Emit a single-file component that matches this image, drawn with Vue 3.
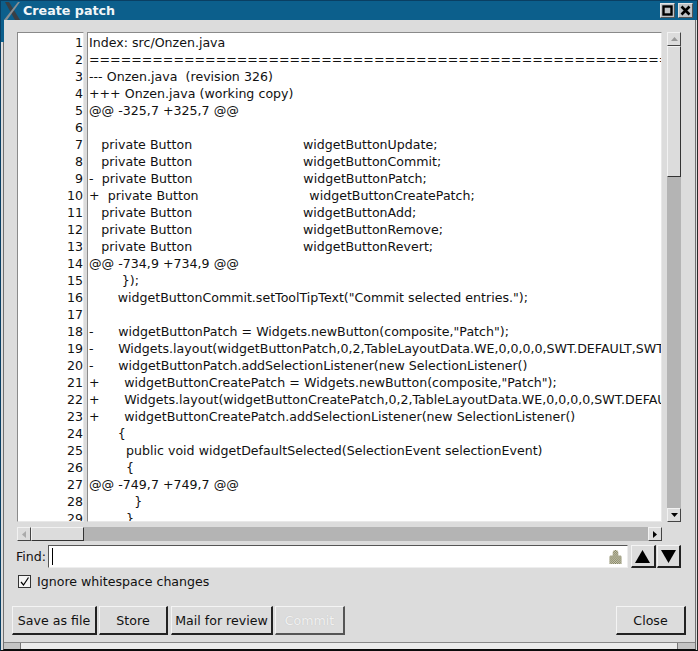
<script setup>
const lines = [
  'Index: src/Onzen.java',
  '===================================================================',
  '--- Onzen.java  (revision 326)',
  '+++ Onzen.java (working copy)',
  '@@ -325,7 +325,7 @@',
  '',
  '   private Button                           widgetButtonUpdate;',
  '   private Button                           widgetButtonCommit;',
  '-  private Button                           widgetButtonPatch;',
  '+  private Button                           widgetButtonCreatePatch;',
  '   private Button                           widgetButtonAdd;',
  '   private Button                           widgetButtonRemove;',
  '   private Button                           widgetButtonRevert;',
  '@@ -734,9 +734,9 @@',
  '        });',
  '       widgetButtonCommit.setToolTipText("Commit selected entries.");',
  '',
  '-      widgetButtonPatch = Widgets.newButton(composite,"Patch");',
  '-      Widgets.layout(widgetButtonPatch,0,2,TableLayoutData.WE,0,0,0,0,SWT.DEFAULT,SWT.DEFAULT);',
  '-      widgetButtonPatch.addSelectionListener(new SelectionListener()',
  '+      widgetButtonCreatePatch = Widgets.newButton(composite,"Patch");',
  '+      Widgets.layout(widgetButtonCreatePatch,0,2,TableLayoutData.WE,0,0,0,0,SWT.DEFAULT,SWT.DEFAULT);',
  '+      widgetButtonCreatePatch.addSelectionListener(new SelectionListener()',
  '       {',
  '         public void widgetDefaultSelected(SelectionEvent selectionEvent)',
  '         {',
  '@@ -749,7 +749,7 @@',
  '           }',
  '         }'
]
</script>

<template>
  <div class="window">
    <div class="titlebar">
      <svg class="xlogo" width="20" height="19" viewBox="0 0 20 19">
        <path d="M4 1 L8 1 L19 19 L14 19 Z" fill="#3a3f44" />
        <path d="M17 1 L19 1 L6 19 L3 19 Z" fill="#8a8f92" />
      </svg>
      <span class="title">Create patch</span>
      <span class="spacer"></span>
      <span class="wbtn"><svg width="11" height="11" viewBox="0 0 11 11"><rect x="1.5" y="1.5" width="8" height="8" fill="none" stroke="#000" stroke-width="2.4" /></svg></span>
      <span class="wbtn"><svg width="11" height="11" viewBox="0 0 11 11"><path d="M1.5 1.5 L9.5 9.5 M9.5 1.5 L1.5 9.5" stroke="#000" stroke-width="2.6" /></svg></span>
    </div>

    <div class="frame">
      <div class="content">
        <div class="editor-row">
          <div class="gutter sunken">
            <div v-for="(l, i) in lines" :key="i" class="num">{{ i + 1 }}</div>
          </div>
          <div class="code sunken">
            <div v-for="(l, i) in lines" :key="i" class="line">{{ l }}</div>
          </div>
          <div class="vscroll">
            <div class="arrow"><svg width="9" height="6" viewBox="0 0 9 6"><path d="M4.5 1 L8 5 L1 5 Z" fill="#999" /></svg></div>
            <div class="vthumb"></div>
            <div class="vtrack"></div>
            <div class="arrow"><svg width="9" height="6" viewBox="0 0 9 6"><path d="M1 1 L8 1 L4.5 5 Z" fill="#000" /></svg></div>
          </div>
        </div>

        <div class="hscroll">
          <div class="arrow harrow"><svg width="6" height="9" viewBox="0 0 6 9"><path d="M5 1 L5 8 L1 4.5 Z" fill="#aaa" /></svg></div>
          <div class="hthumb"></div>
          <div class="htrack"></div>
          <div class="arrow harrow"><svg width="6" height="9" viewBox="0 0 6 9"><path d="M1 1 L5 4.5 L1 8 Z" fill="#000" /></svg></div>
        </div>

        <div class="find-row">
          <label class="find-label">Find:</label>
          <div class="find-input">
            <span class="caret"></span>
            <svg class="lock" width="15" height="15" viewBox="0 0 15 16">
              <defs>
                <pattern id="dither" width="2" height="2" patternUnits="userSpaceOnUse">
                  <rect width="2" height="2" fill="#d8d6bc" />
                  <rect width="1" height="1" fill="#77775c" />
                  <rect x="1" y="1" width="1" height="1" fill="#77775c" />
                </pattern>
              </defs>
              <path d="M4.5 4 a3 3 0 0 1 6 0 V7 H13 Q14 7 14 9 V16 H1 V9 Q1 7 2 7 H4.5 Z" fill="url(#dither)" />
            </svg>
          </div>
          <button class="btn nav first"><svg width="15" height="13" viewBox="0 0 15 13"><path d="M7.5 0 L15 13 L0 13 Z" fill="#000" /></svg></button>
          <button class="btn nav"><svg width="15" height="13" viewBox="0 0 15 13"><path d="M0 0 L15 0 L7.5 13 Z" fill="#000" /></svg></button>
        </div>

        <div class="check-row">
          <span class="checkbox"><svg width="11" height="11" viewBox="0 0 11 11"><path d="M2 6 L4.5 9 L9.5 1.5" fill="none" stroke="#000" stroke-width="1.2" /></svg></span>
          <span>Ignore whitespace changes</span>
        </div>

        <div class="button-row">
          <button class="btn b1">Save as file</button>
          <button class="btn b2">Store</button>
          <button class="btn b3">Mail for review</button>
          <button class="btn b4 disabled">Commit</button>
          <span class="spacer"></span>
          <button class="btn b5">Close</button>
        </div>
      </div>

      <div class="statusbar">
        <span class="grip left"></span>
        <span class="spacer"></span>
        <span class="grip right"></span>
      </div>
    </div>
  </div>
</template>

<style>
html, body { margin: 0; padding: 0; background: #dcdcdc; }
</style>

<style scoped>
.window {
  width: 698px;
  height: 651px;
  box-sizing: border-box;
  display: flex;
  flex-direction: column;
  background: #dcdcdc;
  border-top: 1px solid #0a3f63;
  border-left: 1px solid #0a3f63;
  border-right: 1px solid #2a2a2a;
  border-bottom: 1px solid #0b0b0b;
  font-family: "DejaVu Sans", sans-serif;
  font-size: 12.6px;
  color: #111;
  overflow: hidden;
}
.titlebar {
  height: 19px;
  flex: none;
  display: flex;
  align-items: center;
  background: #0c5f8c;
  color: #fff;
}
.xlogo { flex: none; margin-right: 2px; }
.title {
  font-weight: bold;
  font-size: 12.7px;
  color: #f2f6f8;
}
.spacer { flex: 1; }
.wbtn {
  width: 15px;
  height: 15px;
  box-sizing: border-box;
  display: flex;
  align-items: center;
  justify-content: center;
  margin-left: 3px;
  background: #c0c3c5;
  border: 1px solid;
  border-color: #e4e4e4 #555 #555 #e4e4e4;
}
.wbtn:last-child { margin-right: 4px; }
.frame {
  position: relative;
  flex: 1;
  min-height: 0;
  display: flex;
  flex-direction: column;
  margin: 0 1px 0 2px;
  border-left: 1px solid #707070;
  border-right: 1px solid #707070;
  border-bottom: 1px solid #0b0b0b;
}
.frame::before {
  content: "";
  position: absolute;
  left: -3px;
  top: 0;
  width: 3px;
  height: 22px;
  background: #0c5f8c;
}
.content {
  flex: 1;
  display: flex;
  flex-direction: column;
  padding: 12px 14px 0 13px;
  min-height: 0;
  box-sizing: border-box;
}
.editor-row {
  display: flex;
  height: 490px;
  flex: none;
}
.sunken {
  box-sizing: border-box;
  background: #fff;
  border: 1px solid;
  border-color: #8a8a8a #e8e8e8 #e8e8e8 #8a8a8a;
  overflow: hidden;
}
.gutter {
  width: 67px;
  flex: none;
  text-align: right;
}
.num, .line {
  height: 17px;
  line-height: 17px;
  white-space: pre;
}
.line { word-spacing: 0.1px; }
.gutter .num:first-child, .code .line:first-child { margin-top: 1px; }
.code {
  width: 575px;
  flex: none;
  margin-left: 3px;
  padding-left: 1px;
}
.vscroll {
  width: 14px;
  flex: none;
  margin-left: 5px;
  display: flex;
  flex-direction: column;
}
.arrow {
  flex: none;
  width: 14px;
  height: 14px;
  box-sizing: border-box;
  display: flex;
  align-items: center;
  justify-content: center;
  background: #dcdcdc;
  border: 1px solid;
  border-color: #f2f2f2 #444 #444 #f2f2f2;
}
.vthumb {
  height: 131px;
  box-sizing: border-box;
  background: #dcdcdc;
  border: 1px solid;
  border-color: #f2f2f2 #333 #333 #f2f2f2;
  flex: none;
}
.vtrack, .htrack { flex: 1; background: #b4b4b4; }
.hscroll {
  display: flex;
  height: 14px;
  flex: none;
  margin-top: 5px;
  width: 645px;
}
.hthumb {
  width: 53px;
  box-sizing: border-box;
  flex: none;
  background: #dcdcdc;
  border: 1px solid;
  border-color: #f2f2f2 #333 #333 #f2f2f2;
}
.find-row {
  display: flex;
  align-items: center;
  margin-top: 4px;
  margin-left: -1px;
  height: 23px;
  flex: none;
}
.find-label { width: 32px; flex: none; }
.find-input {
  width: 580px;
  height: 23px;
  box-sizing: border-box;
  flex: none;
  background: #fff;
  border: 1px solid;
  border-color: #555 #eee #eee #555;
  display: flex;
  align-items: center;
  justify-content: space-between;
  padding: 0 4px 0 3px;
}
.caret { width: 1px; height: 17px; background: #000; }
.lock { margin-top: -1px; }
.btn {
  box-sizing: border-box;
  background: #dcdcdc;
  border: 1px solid;
  border-color: #f4f4f4 #222 #222 #f4f4f4;
  border-width: 1px 2px 2px 1px;
  font-family: "DejaVu Sans", sans-serif;
  font-size: 12.6px;
  color: #111;
  padding: 0;
  margin: 0;
  display: flex;
  align-items: center;
  justify-content: center;
}
.nav { width: 25px; height: 23px; margin-left: 1px; }
.nav.first { margin-left: 3px; }
.check-row {
  display: flex;
  align-items: center;
  gap: 6px;
  margin-top: 3px;
  margin-left: 1px;
  height: 20px;
  flex: none;
}
.checkbox {
  width: 13px;
  height: 13px;
  box-sizing: border-box;
  background: #f4f4f4;
  border: 1px solid #333;
  display: flex;
  align-items: center;
  justify-content: center;
}
.button-row {
  display: flex;
  margin-top: 15px;
  margin-left: -5px;
  height: 29px;
  flex: none;
}
.b1 { width: 85px; margin-right: 2px; }
.b2 { width: 69px; margin-right: 3px; }
.b3 { width: 102px; margin-right: 2px; }
.b4 { width: 70px; }
.b5 { width: 70px; margin-right: -5px; }
.disabled { color: #f2f2f2; text-shadow: 0 0 1px #bdbdbd; border-color: #f4f4f4 #555 #555 #f4f4f4; }
.statusbar {
  height: 6px;
  flex: none;
  display: flex;
  background: #ececec;
  border-top: 1px solid #888;
}
.grip { width: 16px; background: #c4c4c4; border-right: 1px solid #777; }
.grip.right { width: 17px; border-right: 0; border-left: 1px solid #777; }
</style>
